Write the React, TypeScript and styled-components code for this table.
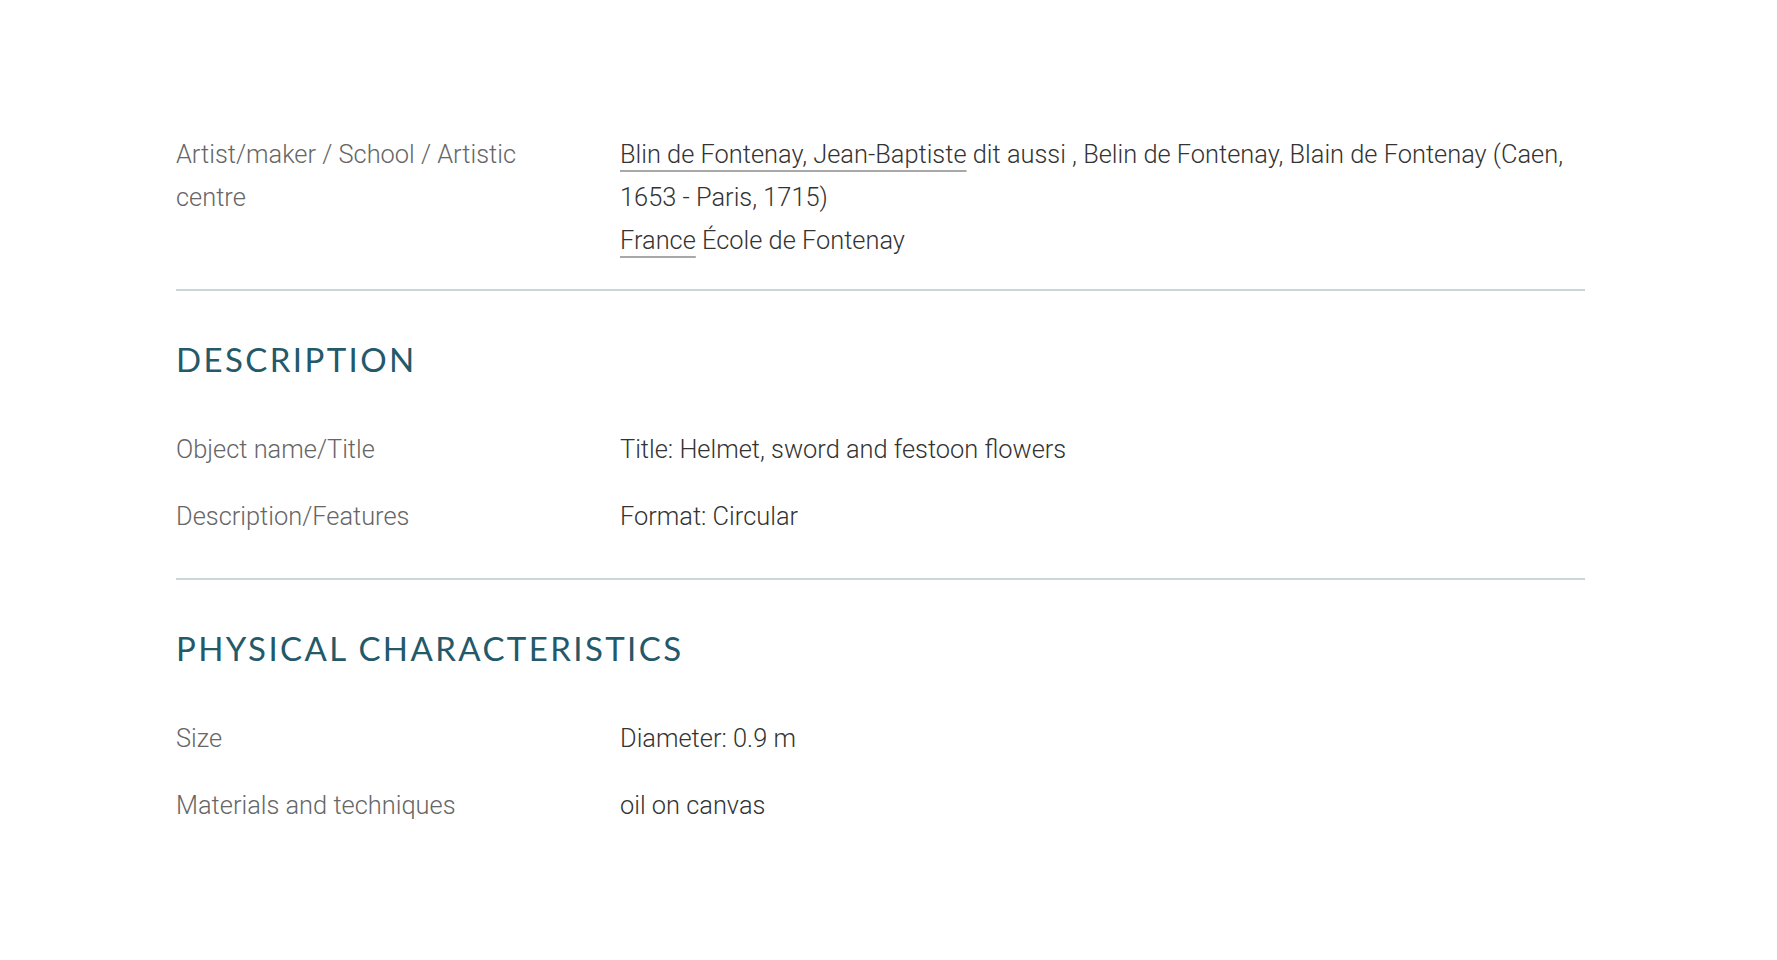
import styled, { createGlobalStyle } from 'styled-components';

type Field = { label: string; value: string };

const GlobalStyle = createGlobalStyle`
  html, body {
    margin: 0;
    padding: 0;
    background: #fff;
  }
  body {
    font-family: Roboto, 'Liberation Sans', sans-serif;
    font-weight: 300;
    -webkit-font-smoothing: antialiased;
  }
`;

const description: Field[] = [
  { label: 'Object name/Title', value: 'Title: Helmet, sword and festoon flowers' },
  { label: 'Description/Features', value: 'Format: Circular' },
];

const physical: Field[] = [
  { label: 'Size', value: 'Diameter: 0.9 m' },
  { label: 'Materials and techniques', value: 'oil on canvas' },
];

const ArtistValue = () => (
  <S_Value>
    <S_Link href="#">Blin de Fontenay, Jean-Baptiste</S_Link> dit aussi , Belin de Fontenay, Blain de
    Fontenay (Caen, 1653 - Paris, 1715)
    <br />
    <S_Link href="#">France</S_Link> École de Fontenay
  </S_Value>
);

const App = () => {
  return (
    <>
      <GlobalStyle />
      <S_Page>
        <S_Section $bottom={15}>
          <S_Row>
            <S_Label>Artist/maker / School / Artistic centre</S_Label>
            <ArtistValue />
          </S_Row>
        </S_Section>

        <S_Section $bottom={28}>
          <S_Heading>Description</S_Heading>
          {description.map((f) => (
            <S_Row key={f.label}>
              <S_Label>{f.label}</S_Label>
              <S_Value>{f.value}</S_Value>
            </S_Row>
          ))}
        </S_Section>

        <S_Section $bottom={40} $last>
          <S_Heading>Physical characteristics</S_Heading>
          {physical.map((f) => (
            <S_Row key={f.label}>
              <S_Label>{f.label}</S_Label>
              <S_Value>{f.value}</S_Value>
            </S_Row>
          ))}
        </S_Section>
      </S_Page>
    </>
  );
};

export default App;

const S_Page = styled.main`
  width: 1409px;
  margin: 0 auto;
  padding: 121px 0 100px;
  position: relative;
  left: -8px;
`;

const S_Section = styled.section<{ $bottom: number; $last?: boolean }>`
  padding-bottom: ${(p) => p.$bottom}px;
  border-bottom: ${(p) => (p.$last ? 'none' : '2px solid #c9d7da')};

  & + & {
    padding-top: 48px;
  }
`;

const S_Heading = styled.h2`
  margin: 0 0 37px;
  font-family: Lato, 'Open Sans', sans-serif;
  font-weight: 400;
  font-size: 33px;
  line-height: 40px;
  letter-spacing: 2.4px;
  text-transform: uppercase;
  color: #24596a;
`;

const S_Row = styled.div`
  display: grid;
  grid-template-columns: 444px 1fr;
  padding: 12px 0;
  font-size: 25.4px;
  line-height: 43px;
`;

const S_Label = styled.div`
  color: #666;
  padding-right: 40px;
`;

const S_Value = styled.div`
  color: #333;
`;

const S_Link = styled.a`
  color: #333;
  text-decoration: underline;
  text-decoration-color: #a8a8a8;
  text-decoration-thickness: 2px;
  text-underline-offset: 7px;
`;
